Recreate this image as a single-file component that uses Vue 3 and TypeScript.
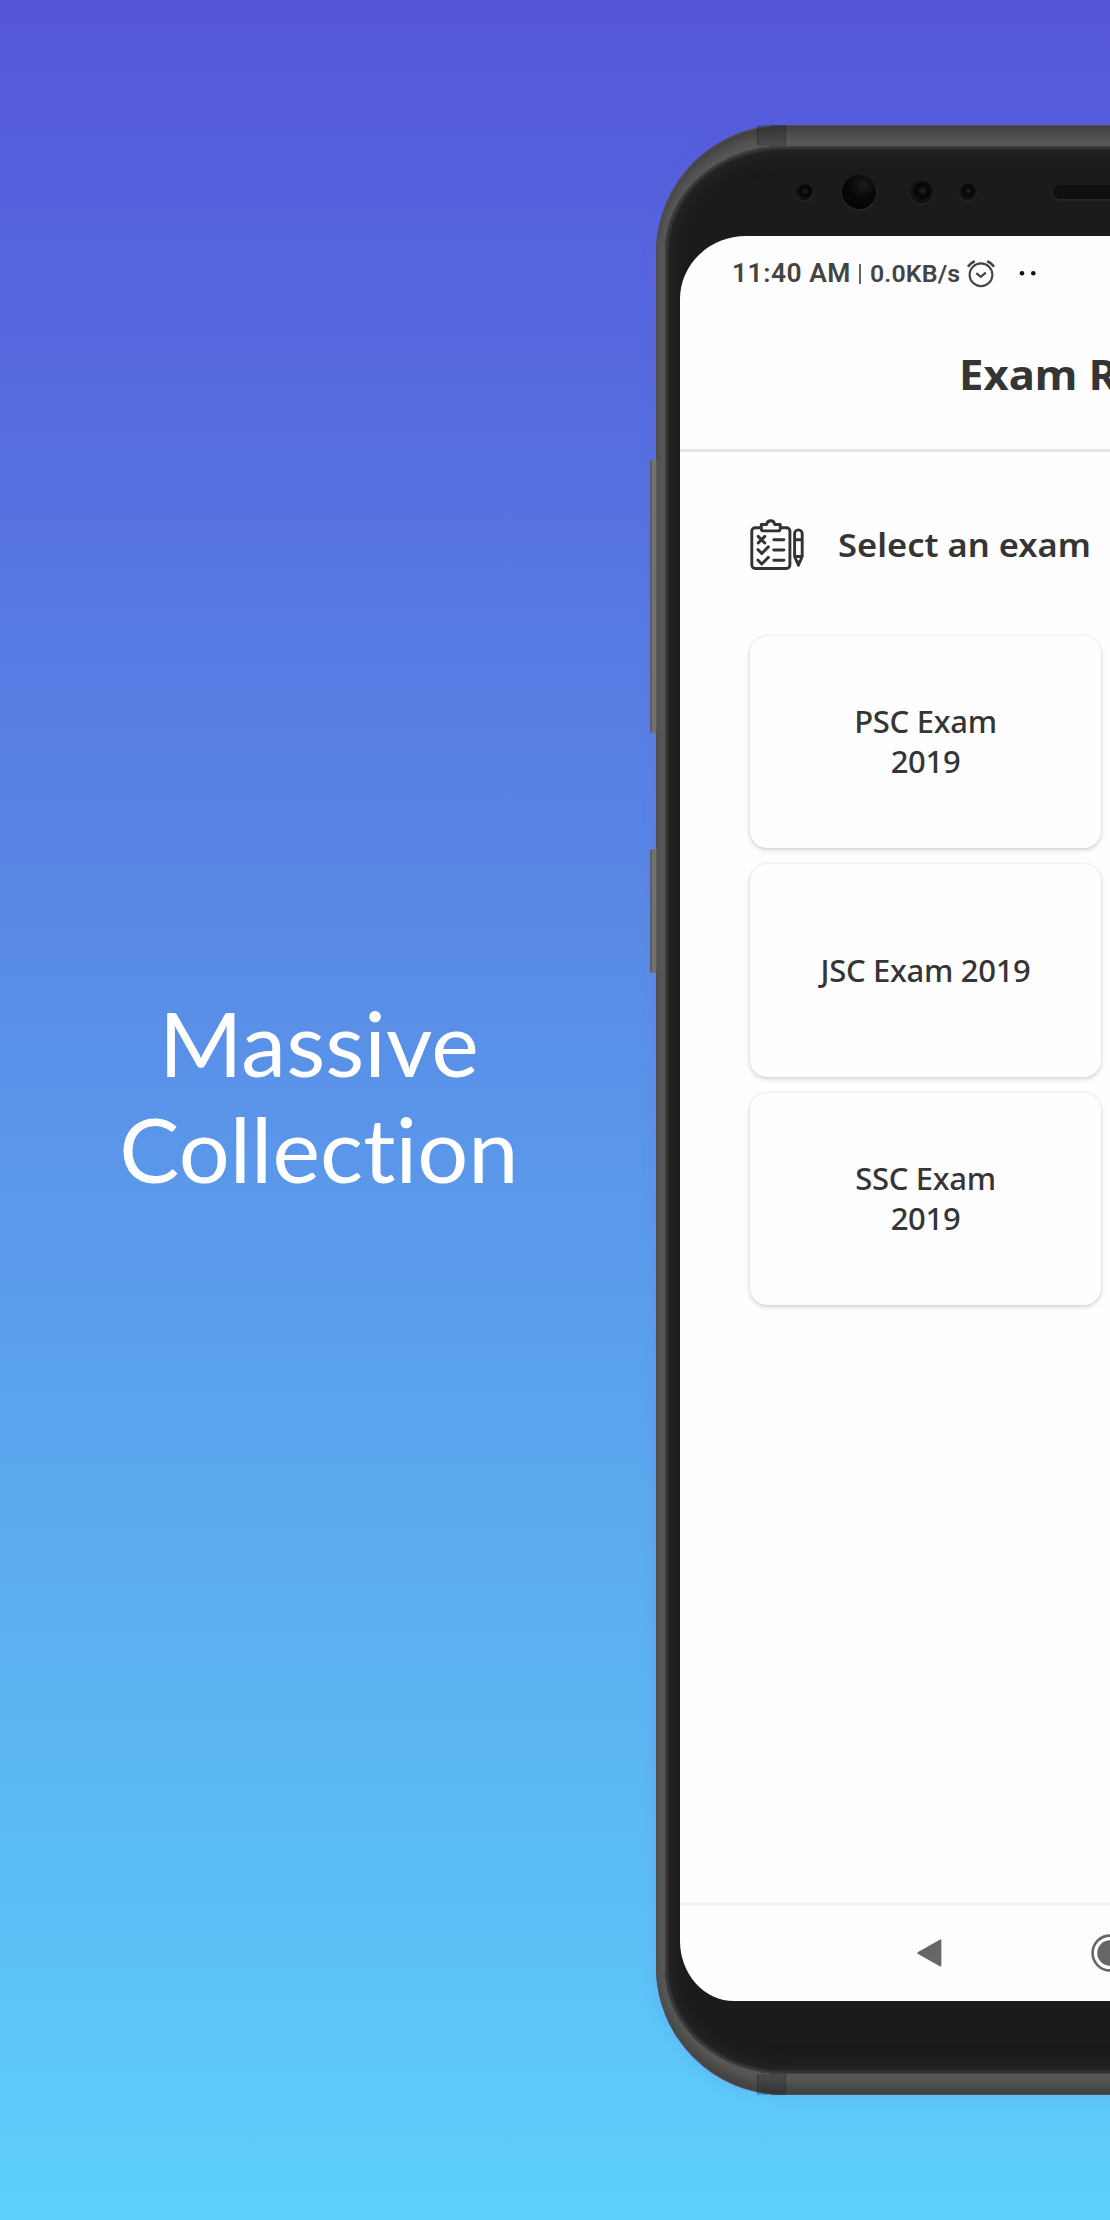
<script setup lang="ts">
interface Sensor {
  x: number
  size: number
  kind: string
}

const exams: string[][] = [['PSC Exam', '2019'], ['JSC Exam 2019'], ['SSC Exam', '2019']]

const sensors: Sensor[] = [
  { x: 139.5, size: 17, kind: 'lens' },
  { x: 193.5, size: 34, kind: 'camera' },
  { x: 256.5, size: 23, kind: 'lens' },
  { x: 302, size: 17, kind: 'lens' },
]
</script>

<template>
  <main class="promo">
    <h1 class="headline">Massive<br />Collection</h1>

    <section class="phone">
      <i class="side-button volume"></i>
      <i class="side-button power"></i>
      <i class="antenna top"></i>
      <i class="antenna bottom"></i>
      <div class="bezel">
        <i
          v-for="s in sensors"
          :key="s.x"
          :class="['sensor', s.kind]"
          :style="{ left: s.x - s.size / 2 + 'px', width: s.size + 'px', height: s.size + 'px' }"
        ></i>
        <i class="speaker"></i>

        <div class="screen">
          <div class="status">
            <span class="time">11:40 AM</span>
            <span class="bar"></span>
            <span class="speed">0.0KB/s</span>
            <svg class="alarm" width="28" height="28" viewBox="0 0 28 28">
              <g fill="none" stroke="#444" stroke-width="2.1">
                <circle cx="14" cy="14.8" r="11.4" />
                <path d="M9.3 13.1l4.5 3.8 5-4.2" stroke-width="2.2" />
                <path d="M.9 6.7C2.6 4.2 4.9 2.3 7.8 1.2M20.2 1.2c2.9 1.1 5.2 3 6.9 5.5" stroke-width="2.6" />
              </g>
            </svg>
            <svg width="18" height="6" viewBox="0 0 18 6">
              <circle cx="3" cy="2.3" r="2.3" fill="#111" />
              <circle cx="14.3" cy="2.3" r="2.3" fill="#111" />
            </svg>
          </div>

          <header class="title"><span>Exam R</span></header>

          <div class="prompt">
            <svg width="54" height="52" viewBox="0 0 54 52">
              <g fill="none" stroke="#333" stroke-width="2.9" stroke-linecap="round" stroke-linejoin="round">
                <path d="M11 8.7H5.2a3.4 3.4 0 0 0-3.4 3.4v34a3.4 3.4 0 0 0 3.4 3.4h31.3a3.4 3.4 0 0 0 3.4-3.4v-34a3.4 3.4 0 0 0-3.4-3.4H31" />
                <path d="M11.3 5.5h5.3c.4-2.3 2-3.7 4.1-3.7s3.7 1.4 4.1 3.7h5.4v4.2c0 1.4-.9 2.2-2.2 2.2H13.5c-1.3 0-2.2-.8-2.2-2.2z" />
                <path d="M8.2 17.4l6.6 6.6M14.8 17.4l-6.6 6.6M7.9 30.6l3.8 3.9 6.6-6.6M7.9 41.1l3.8 3.9 6.6-6.6" />
                <path d="M23.8 20.8h10.1M23.8 31h10.1M23.8 41.3h10.1" />
                <path d="M44.6 37.5V14.7a3.8 3.8 0 0 1 7.6 0v22.8l-3.8 8.8zM44.6 20.8h7.6M44.6 37.5h7.6" />
              </g>
              <path d="M46.6 41.5h3.6l-1.8 5z" fill="#333" />
            </svg>
            <span>Select an exam</span>
          </div>

          <div class="cards">
            <article v-for="lines in exams" :key="lines[0]" class="card">
              <span v-for="line in lines" :key="line">{{ line }}</span>
            </article>
          </div>

          <nav class="nav">
            <svg width="26" height="30" viewBox="0 0 26 30">
              <path d="M24.6 2.2v25.6L2 15z" fill="#666" stroke="#666" stroke-width="1.5" stroke-linejoin="round" />
            </svg>
            <svg width="38" height="38" viewBox="0 0 38 38">
              <circle cx="19" cy="19" r="17.4" fill="none" stroke="#666" stroke-width="2.6" />
              <circle cx="19" cy="19" r="12.8" fill="#666" />
            </svg>
          </nav>
        </div>
      </div>
    </section>
  </main>
</template>

<style>
body {
  margin: 0;
}
</style>

<style scoped>
.promo {
  box-sizing: border-box;
  display: flex;
  width: 1110px;
  height: 2220px;
  overflow: hidden;
  background: linear-gradient(#5456d9, #5a94e9 50%, #5dd0fa);
}
.headline {
  flex: none;
  align-self: center;
  width: 638px;
  margin: 0 18px 30px 0;
  font: 400 90px/106.4px Lato, sans-serif;
  font-variant-ligatures: none;
  letter-spacing: 0.1px;
  text-align: center;
  color: #fff;
}
.phone {
  position: relative;
  box-sizing: border-box;
  flex: none;
  width: 908px;
  height: 1970px;
  margin-top: 125px;
  padding: 20.5px 9px 21.5px;
  border-radius: 128px;
  background: #585858;
  box-shadow:
    0 0 14px rgba(110, 90, 240, 0.22),
    inset 0 0 0 1px #505050,
    inset 0 13px 11px -4px #404040,
    inset 0 -13px 11px -4px #404040;
}
.bezel {
  position: relative;
  box-sizing: border-box;
  height: 1928px;
  padding: 90px 15px 0;
  border-radius: 119px / 105px;
  background: #1b1b1b;
  box-shadow:
    inset 0 0 0 1px #444,
    inset 0 0 0 3.5px #333,
    inset 0 0 22px 2px #2e2e2e;
}
.side-button {
  position: absolute;
  left: -6px;
  width: 7px;
  border-radius: 2px 0 0 2px;
  background: linear-gradient(90deg, #5e5e5e 1.5px, #727272 2px, #707070 6px, #494949);
}
.volume {
  top: 335px;
  height: 273px;
}
.power {
  top: 724px;
  height: 124px;
}
.antenna {
  position: absolute;
  left: 101px;
  box-sizing: border-box;
  width: 29px;
  height: 21px;
  border: solid rgba(0, 0, 0, 0.15);
  border-width: 0 1px;
  background: rgba(0, 0, 0, 0.17);
}
.antenna.top {
  top: 0;
}
.antenna.bottom {
  bottom: 0;
}
.sensor {
  position: absolute;
  top: 46px;
  transform: translateY(-50%);
  border-radius: 50%;
  box-shadow: 0 1px 1px 1px #242424;
}
.sensor.lens {
  background: radial-gradient(circle at 55% 44%, #222 0, #080808 28%, #060606 40%, #121212 54%);
}
.sensor.camera {
  background: radial-gradient(circle at 62% 30%, #1b1b1b 0, #070707 45%, #030303);
}
.speaker {
  position: absolute;
  left: 388px;
  top: 39px;
  width: 114px;
  height: 14px;
  border-radius: 7px;
  background: #0f0f0f;
  box-shadow: 0 1px 1px 1px #262626;
}
.screen {
  box-sizing: border-box;
  display: flex;
  flex-direction: column;
  height: 1765px;
  border-radius: 66px 66px 54px 54px / 63px 63px 60px 60px;
  overflow: hidden;
  background: #fefefe;
  color: #353535;
  font-family: "Noto Sans", "Open Sans", sans-serif;
}
.status {
  flex: none;
  display: flex;
  align-items: center;
  height: 76.5px;
  padding-left: 52px;
  font-family: Roboto, sans-serif;
  font-weight: 600;
  color: #444;
  white-space: nowrap;
}
.time {
  width: 127px;
  font-size: 25px;
  letter-spacing: 0.5px;
  transform: scaleX(1.055);
  transform-origin: left;
}
.bar {
  width: 2px;
  height: 20px;
  background: #666;
}
.speed {
  width: 96px;
  margin-left: 9px;
  font-size: 23.5px;
  letter-spacing: 0.1px;
  transform: scaleX(1.06);
  transform-origin: left;
}
.alarm {
  margin: 0 24px 0 1px;
}
.title {
  flex: none;
  box-sizing: border-box;
  height: 139.5px;
  padding: 0 0 12px 279px;
  border-bottom: 3px solid #dfe6e8;
  font-size: 41.5px;
  font-weight: 700;
  line-height: 124.5px;
  white-space: nowrap;
}
.title span {
  display: inline-block;
  transform: scaleX(1.052);
  transform-origin: left;
}
.prompt {
  flex: none;
  box-sizing: border-box;
  display: flex;
  align-items: center;
  gap: 34px;
  height: 184px;
  padding: 2px 0 0 70px;
  font-size: 32.5px;
  font-weight: 600;
  white-space: nowrap;
}
.prompt span {
  transform: scaleX(1.062);
  transform-origin: left;
}
.cards {
  flex: 1;
  display: flex;
  flex-direction: column;
  gap: 16.1px;
  padding-left: 70px;
}
.card {
  box-sizing: border-box;
  display: flex;
  flex-direction: column;
  align-items: center;
  justify-content: center;
  width: 351px;
  height: 212.5px;
  padding-bottom: 1px;
  border-radius: 17px;
  background: #fefefe;
  box-shadow:
    0 0 2px rgba(0, 0, 0, 0.09),
    0 2px 5px rgba(0, 0, 0, 0.17);
  font-size: 31px;
  font-weight: 500;
  line-height: 40px;
  letter-spacing: -0.3px;
}
.nav {
  flex: none;
  box-sizing: border-box;
  display: flex;
  align-items: center;
  gap: 149px;
  height: 98px;
  padding: 1px 0 0 235.5px;
  border-top: 2px solid #f3f3f3;
}
</style>
